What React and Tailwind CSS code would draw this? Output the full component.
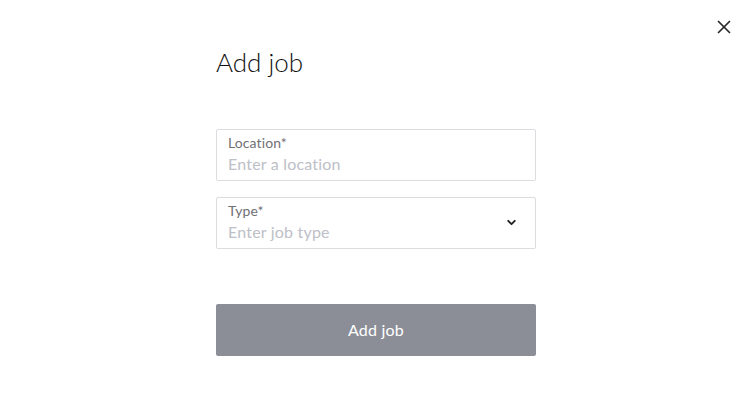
import { X, ChevronDown } from "lucide-react";

const Field = ({ label, placeholder, select }) => (
  <div className="flex items-center border border-[#dcdde0] rounded-[2px] pl-[11px] pr-[17px] pt-[4px] pb-[5px]">
    <div className="flex-1">
      <div className="text-[14px] leading-[18px] text-[#707075] tracking-[0.1px]">{label}</div>
      <input
        className="block w-full mt-[1px] text-[16px] leading-[22px] h-[22px] outline-none placeholder:text-[#bdc0c7] text-[#333] tracking-[0.2px]"
        placeholder={placeholder}
      />
    </div>
    {select && <ChevronDown size={13} strokeWidth={3.5} className="text-[#222]" />}
  </div>
);

export default function App() {
  return (
    <div className="relative w-[752px] h-[420px] bg-white" style={{ fontFamily: "Lato, 'Open Sans', sans-serif" }}>
      <button className="absolute right-[17px] top-[16px] text-[#2a2a2a]">
        <X size={22} strokeWidth={1.9} />
      </button>

      <div className="w-[320px] mx-auto pt-[46px]">
        <h1 className="text-[26px] leading-[32px] font-light text-[#111]">Add job</h1>

        <div className="mt-[51px] flex flex-col gap-[16px]">
          <Field label="Location*" placeholder="Enter a location" />
          <Field label="Type*" placeholder="Enter job type" select />
        </div>

        <button className="mt-[55px] w-full h-[52px] rounded-[2px] bg-[#8b8e97] text-white text-[16px] tracking-[0.2px]">
          Add job
        </button>
      </div>
    </div>
  );
}
